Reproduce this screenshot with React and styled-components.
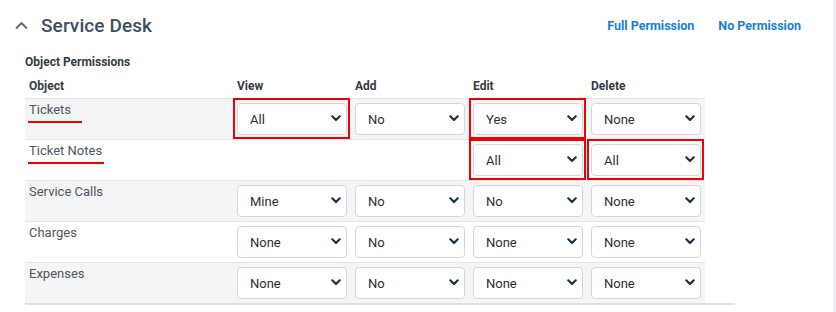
import React from 'react';
import styled, { createGlobalStyle } from 'styled-components';

const GlobalStyle = createGlobalStyle`
	html, body {
		margin: 0;
		padding: 0;
		background: #ffffff;
		font-family: Roboto, "Liberation Sans", Arial, sans-serif;
	}
`;

const Page = styled.div`
	display: flex;
	width: 836px;
	height: 312px;
	overflow: hidden;
`;

const Main = styled.div`
	flex: 1;
	display: flex;
	flex-direction: column;
`;

const Track = styled.div`
	width: 3px;
	background: #eceef1;
`;

const Header = styled.div`
	display: flex;
	align-items: center;
	height: 50px;
	padding: 0 32px 0 15px;
`;

const Toggle = styled.svg`
	width: 13px;
	height: 9px;
	margin-right: 13px;
	margin-top: 1px;
`;

const Title = styled.h2`
	margin: 0;
	font-size: 19px;
	font-weight: 500;
	color: #3b4f61;
	letter-spacing: 0.1px;
	flex: 1;
`;

const Links = styled.div`
	display: flex;
	gap: 24px;
`;

const LinkButton = styled.span`
	font-size: 12.5px;
	font-weight: 700;
	color: #1a80d3;
	cursor: pointer;
`;

const Section = styled.div`
	padding-left: 25px;
`;

const SectionTitle = styled.div`
	font-size: 12px;
	font-weight: 700;
	color: #333c44;
	line-height: 16px;
	margin-top: 4px;
`;

const TableWrap = styled.div`
	width: 710px;
	border-bottom: 2px solid #dedfe1;
	margin-top: 6px;
`;

const Grid = styled.div`
	display: grid;
	grid-template-columns: 208px repeat(4, 118px);
	width: 680px;
`;

const HeadCell = styled.div`
	height: 22px;
	line-height: 20px;
	padding: 0 4px;
	font-size: 12px;
	font-weight: 700;
	color: #333c44;
`;

const Cell = styled.div`
	height: 40px;
	box-sizing: content-box;
	border-top: 1px solid #e3e5e8;
	background: ${(p) => (p.$shade ? '#f4f5f6' : '#ffffff')};
	padding: 0 4px;
	display: flex;
	align-items: flex-start;
`;

const Label = styled.span`
	position: relative;
	display: inline-block;
	margin-top: 3px;
	font-size: 13px;
	line-height: 16px;
	color: #4d5761;

	${(p) =>
		p.$underline &&
		`
		&::after {
			content: '';
			position: absolute;
			left: -1px;
			bottom: -5px;
			width: ${p.$underline}px;
			height: 2px;
			background: #f00000;
		}
	`}
`;

const SelectBox = styled.div`
	position: relative;
	margin-top: 4px;
	width: 110px;
	height: 32px;

	${(p) =>
		p.$marked &&
		`
		&::after {
			content: '';
			position: absolute;
			top: -5px;
			bottom: -4px;
			left: -4px;
			right: -3px;
			border: 2px solid #f00000;
			pointer-events: none;
		}
	`}
`;

const Select = styled.select`
	appearance: none;
	-webkit-appearance: none;
	width: 110px;
	height: 32px;
	box-sizing: border-box;
	border: 1px solid #d3d7db;
	border-radius: 4px;
	background: #ffffff;
	padding: 0 26px 0 12px;
	font-family: Roboto, "Liberation Sans", Arial, sans-serif;
	font-size: 13px;
	color: #2c2f33;
	outline: none;
`;

const Chevron = styled.svg`
	position: absolute;
	right: 6px;
	top: 12px;
	width: 10px;
	height: 7px;
	pointer-events: none;
`;

const rows = [
	{ name: 'Tickets', underline: 54, values: ['All', 'No', 'Yes', 'None'], marks: [true, false, true, false] },
	{ name: 'Ticket Notes', underline: 76, values: [null, null, 'All', 'All'], marks: [false, false, true, true] },
	{ name: 'Service Calls', values: ['Mine', 'No', 'No', 'None'], marks: [] },
	{ name: 'Charges', values: ['None', 'No', 'None', 'None'], marks: [] },
	{ name: 'Expenses', values: ['None', 'No', 'None', 'None'], marks: [] },
];

const Dropdown = ({ value, marked }) => (
	<SelectBox $marked={marked}>
		<Select defaultValue={value}>
			<option>{value}</option>
		</Select>
		<Chevron viewBox="0 0 10 7">
			<path d="M1.3 1.3 L5 5 L8.7 1.3" fill="none" stroke="#1d3344" strokeWidth="2.2" strokeLinecap="round" strokeLinejoin="round" />
		</Chevron>
	</SelectBox>
);

const App = () => {
	return (
		<Page>
			<GlobalStyle />
			<Main>
				<Header>
					<Toggle viewBox="0 0 13 9">
						<path d="M1 7.5 L6.5 2 L12 7.5" fill="none" stroke="#5b6a77" strokeWidth="1.8" />
					</Toggle>
					<Title>Service Desk</Title>
					<Links>
						<LinkButton>Full Permission</LinkButton>
						<LinkButton>No Permission</LinkButton>
					</Links>
				</Header>
				<Section>
					<SectionTitle>Object Permissions</SectionTitle>
					<TableWrap>
						<Grid>
							<HeadCell>Object</HeadCell>
							<HeadCell>View</HeadCell>
							<HeadCell>Add</HeadCell>
							<HeadCell>Edit</HeadCell>
							<HeadCell>Delete</HeadCell>
							{rows.map((row, i) => (
								<React.Fragment key={row.name}>
									<Cell $shade={i % 2 === 0}>
										<Label $underline={row.underline}>{row.name}</Label>
									</Cell>
									{row.values.map((v, j) => (
										<Cell key={j} $shade={i % 2 === 0}>
											{v && <Dropdown value={v} marked={row.marks[j]} />}
										</Cell>
									))}
								</React.Fragment>
							))}
						</Grid>
					</TableWrap>
				</Section>
			</Main>
			<Track />
		</Page>
	);
};

export default App;
